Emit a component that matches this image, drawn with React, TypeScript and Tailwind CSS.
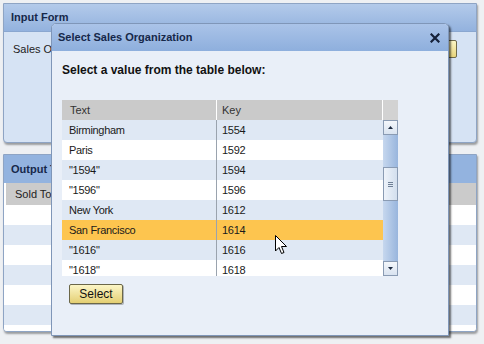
import React from "react"

const dialogRows = [
  { text: "Birmingham", key: "1554" },
  { text: "Paris", key: "1592" },
  { text: '"1594"', key: "1594" },
  { text: '"1596"', key: "1596" },
  { text: "New York", key: "1612" },
  { text: "San Francisco", key: "1614", selected: true },
  { text: '"1616"', key: "1616" },
  { text: '"1618"', key: "1618" },
]

function Cursor() {
  return (
    <svg width="13" height="22" viewBox="0 0 13 22" className="absolute left-[275px] top-[235px]">
      <path d="M0.5 0.5 L0.5 16 L4 12.5 L6.5 18.5 L9 17.5 L6.5 11.5 L11.5 11.5 Z" fill="#fff" stroke="#000" strokeWidth="1" strokeLinejoin="miter" />
    </svg>
  )
}

function ScrollArrow({ up }: { up?: boolean }) {
  return (
    <div className="h-[15px] w-[15px] border border-[#8a9bb3] bg-gradient-to-b from-[#f4f7fb] to-[#d9e3f0] flex items-center justify-center">
      <svg width="5" height="3" viewBox="0 0 5 3">
        <path d={up ? "M2.5 0 L5 3 L0 3 Z" : "M0 0 L5 0 L2.5 3 Z"} fill="#1d2a40" />
      </svg>
    </div>
  )
}

export default function App() {
  return (
    <div className="relative w-[484px] h-[344px] overflow-hidden bg-[#eef0f3] font-['Liberation_Sans',Arial,sans-serif] text-[11px] text-[#1a1a1a]">
      <div className="flex flex-col pt-[3px] pl-[3px]">
        {/* Input Form panel */}
        <div className="w-[474px] h-[140px] border border-[#8ea4c4] rounded-b-[4px] bg-[#d6e3f4] shadow-[1px_2px_2px_rgba(0,0,0,0.35)] overflow-hidden">
          <div className="h-[28px] bg-gradient-to-b from-[#b3caea] to-[#93b2de] flex items-center pl-[7px] border-b border-[#8aa7d0]">
            <span className="font-bold text-[11px] text-[#16284a]">Input Form</span>
          </div>
          <div className="flex items-center h-[34px] pl-[9px] pr-[19px]">
            <span className="text-[11px] text-[#222]">Sales Organization:</span>
            <div className="ml-auto h-[18px] w-[58px] border border-[#6f6a4a] rounded-[2px] bg-gradient-to-b from-[#fcf6c4] to-[#e8d47a]" />
          </div>
        </div>

        {/* Output panel */}
        <div className="mt-[11px] w-[474px] h-[178px] border border-[#8ea4c4] rounded-b-[4px] bg-white shadow-[1px_2px_2px_rgba(0,0,0,0.35)] overflow-hidden">
          <div className="h-[28px] bg-[#93b3df] flex items-center pl-[7px]">
            <span className="font-bold text-[11px] text-[#16284a]">Output Table</span>
          </div>
          <div className="h-[22px] bg-[#cbcbcb] flex items-center pl-[9px] border-l-2 border-white">
            <span className="text-[#222]">Sold To</span>
          </div>
          {[0, 1, 2, 3, 4, 5, 6].map((i) => (
            <div key={i} className={i % 2 === 0 ? "h-[20px] bg-white" : "h-[20px] bg-[#dfe8f4]"} />
          ))}
        </div>
      </div>

      {/* Value help dialog */}
      <div className="absolute left-[51px] top-[23px] w-[398px] h-[313px] flex flex-col rounded-t-[5px] border border-[#7f96b8] bg-[#e9eff8] shadow-[2px_2px_2px_rgba(0,0,0,0.55)] overflow-hidden">
        <div className="h-[27px] shrink-0 bg-gradient-to-b from-[#aac3e8] to-[#8eafdd] flex items-center pl-[6px] pr-[6px]">
          <span className="font-bold text-[11px] text-[#16284a]">Select Sales Organization</span>
          <svg width="10" height="10" viewBox="0 0 10 10" className="ml-auto mr-[2px]">
            <path d="M1.5 1.5 L8.5 8.5 M8.5 1.5 L1.5 8.5" stroke="#15213a" strokeWidth="2.2" strokeLinecap="square" />
          </svg>
        </div>
        <div className="flex flex-col pl-[10px] pt-[12px]">
          <span className="font-bold text-[12px] text-[#111] leading-[14px]">Select a value from the table below:</span>
          <div className="mt-[23px] w-[336px] flex flex-col">
            <div className="h-[20px] flex bg-[#cacaca] text-[#333]">
              <div className="w-[155px] pl-[8px] flex items-center border-r border-white">Text</div>
              <div className="w-[166px] pl-[5px] flex items-center border-r border-white">Key</div>
              <div className="flex-1 bg-[#d2d2d2]" />
            </div>
            <div className="h-[156px] flex overflow-hidden">
              <div className="w-[321px] flex flex-col">
                {dialogRows.map((r, i) => (
                  <div
                    key={r.key}
                    className={
                      "h-[20px] shrink-0 flex items-center tracking-[-0.3px] " +
                      (r.selected ? "bg-[#fdc54f]" : i % 2 === 0 ? "bg-[#dfe8f4]" : "bg-white")
                    }
                  >
                    <div className="w-[155px] h-full pl-[7px] flex items-center border-r border-[#9aa3ae]">{r.text}</div>
                    <div className="flex-1 pl-[5px]">{r.key}</div>
                  </div>
                ))}
              </div>
              <div className="w-[15px] flex flex-col bg-gradient-to-r from-[#c6d7ee] to-[#98b5dd]">
                <ScrollArrow up />
                <div className="mt-[32px] h-[34px] w-[15px] border border-[#8a9bb3] bg-gradient-to-r from-[#eef3fa] to-[#d3dfee] flex flex-col items-center justify-center gap-[1px]">
                  <div className="w-[5px] h-px bg-[#6f8096]" />
                  <div className="w-[5px] h-px bg-[#6f8096]" />
                  <div className="w-[5px] h-px bg-[#6f8096]" />
                </div>
                <div className="flex-1" />
                <ScrollArrow />
              </div>
            </div>
          </div>
          <button className="mt-[8px] ml-[7px] w-[54px] h-[20px] border border-[#6b6749] rounded-[2px] bg-gradient-to-b from-[#fcf6c6] to-[#e4cf72] text-[12px] text-[#111] flex items-center justify-center shadow-[1px_1px_0_rgba(0,0,0,0.25)]">
            Select
          </button>
        </div>
      </div>

      <Cursor />
    </div>
  )
}
